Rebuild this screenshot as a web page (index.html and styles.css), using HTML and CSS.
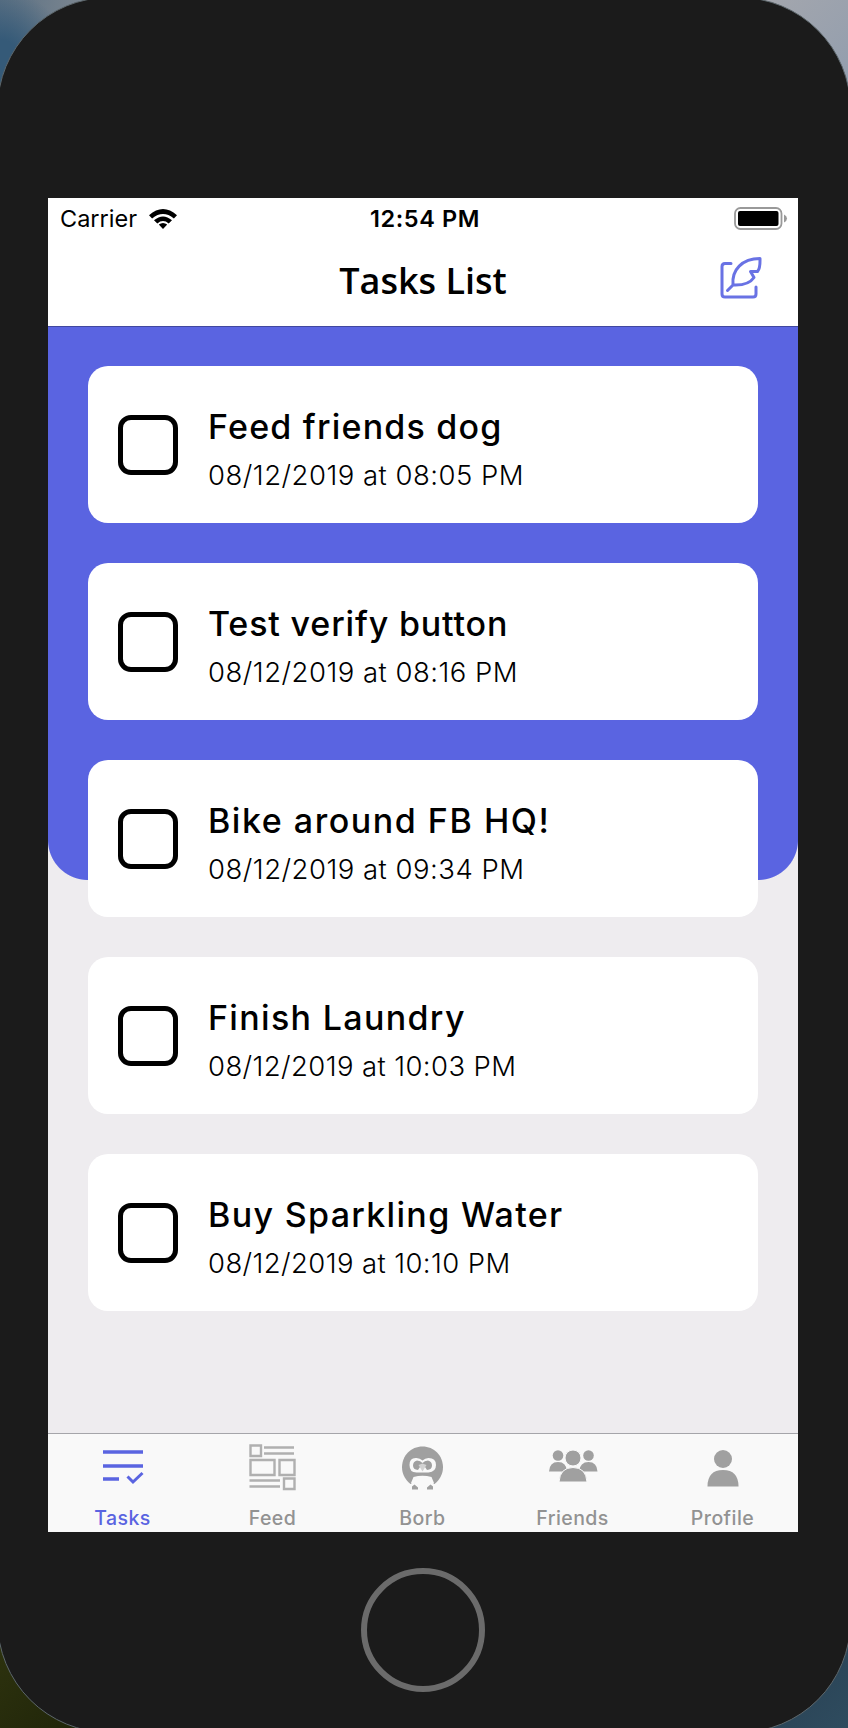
FILE: index.html
```html
<!DOCTYPE html>
<html lang="en">
<head>
<meta charset="utf-8">
<title>Tasks List</title>
<link rel="stylesheet" href="styles.css">
</head>
<body>
<div class="desktop">
<div class="phone">
  <main class="screen">
    <div class="status">
      <div class="carrier"><span class="carrier-name">Carrier</span>
        <svg class="wifi" width="28" height="20" viewBox="0 0 28 20"><path d="M0 6.2Q14-6 28 6.2L24.9 9.4Q14 .5 3.100 9.400Z"/><path d="M5 11.200Q14 3.600 23 11.200L19.700 14.400Q14 9.700 8.300 14.400Z"/><path d="M9.800 15.600Q14 12.200 18.200 15.600L14 20Z"/></svg>
      </div>
      <div class="time">12:54 PM</div>
      <svg class="battery" width="54" height="24" viewBox="0 0 54 24"><rect x="1" y="1" width="46.500" height="21" rx="5.500" fill="none" stroke="#999" stroke-width="1.800"/><rect x="4" y="4" width="40.500" height="15" rx="2" fill="#000"/><path d="M50 7.500q3 1.300 3 4t-3 4z" fill="#999"/></svg>
    </div>
    <header class="nav">
      <h1>Tasks List</h1>
      <svg class="compose" width="44" height="44" viewBox="0 0 44 44"><path d="M12 7.500H6Q3 7.500 3 10.500V38Q3 41 6 41H34Q37 41 37 38V31"/><path d="M8.500 34.500L14 29C12.500 14 23 2.500 41 2.500C41 7 41.500 12 38.500 15.500H31.500L35 21.500C31 27.500 24 29.500 14 29"/></svg>
    </header>
    <section class="tasks">
      <article class="card"><span class="box"></span><div><h2 class="t1">Feed friends dog</h2><p class="d1">08/12/2019 at 08:05 PM</p></div></article>
      <article class="card"><span class="box"></span><div><h2 class="t2">Test verify button</h2><p class="d2">08/12/2019 at 08:16 PM</p></div></article>
      <article class="card"><span class="box"></span><div><h2 class="t3">Bike around FB HQ!</h2><p class="d3">08/12/2019 at 09:34 PM</p></div></article>
      <article class="card"><span class="box"></span><div><h2 class="t4">Finish Laundry</h2><p class="d4">08/12/2019 at 10:03 PM</p></div></article>
      <article class="card"><span class="box"></span><div><h2 class="t5">Buy Sparkling Water</h2><p class="d5">08/12/2019 at 10:10 PM</p></div></article>
    </section>
    <nav class="tabs">
      <a class="tab active"><svg width="50" height="50" viewBox="0 0 50 50" fill="none" stroke="#5a64e1" stroke-width="3"><path d="M5 9H45M5 23H45M5 36H21" stroke-width="3.600"/><path d="M29.500 33.500L35 39L44.500 30" stroke-width="3"/></svg><span>Tasks</span></a>
      <a class="tab"><svg width="50" height="50" viewBox="0 0 50 50" fill="none" stroke="#b0b0b0" stroke-width="2.400"><path d="M2.500 2.500h10.500v10.500h-10.500zM2.500 17h24v15h-24zM31.500 17h15v15h-15zM36 35.500h10.500v10.500h-10.500zM16 4.500H46M16 10.500H46M1.500 37.500H32M1.500 43.500H32"/></svg><span>Feed</span></a>
      <a class="tab"><svg width="50" height="50" viewBox="0 0 50 50" fill="#a0a0a0"><path d="M24.500 3.500C36 3.500 45 12.500 45 24.500C45 31 41.500 37 36.500 41H12.500C7.500 37 4 31 4 24.500C4 12.500 13 3.500 24.500 3.500Z"/><path d="M15.500 34Q24.500 31.500 33.500 34L36 40Q33.500 46 24.500 46T13 40Z" fill="#f9f9f9"/><path d="M14 46.500v-3l2.500-2 3.500 3v2zM35 46.500v-3l-2.500-2-3.500 3v2z"/><path d="M18.500 15Q22 15 24.500 17.500Q27 15 30.500 15Q38 15 38 22T30.500 29.500H18.500Q11.500 29.500 11.500 22T18.500 15Z" fill="#f9f9f9"/><path d="M19 17.500Q22.500 17.500 24.500 20Q26.500 17.500 30 17.500Q34 18.500 34 22.500T29 27L27 24H22L20 27Q15 26.500 15 22.500T19 17.500Z"/><path d="M20.500 22L24.500 20.500L28.500 22L24.500 28.500Z" fill="#d2d2d2"/></svg><span>Borb</span></a>
      <a class="tab"><svg width="50" height="50" viewBox="0 0 50 50" fill="#a0a0a0"><circle cx="10" cy="12.500" r="5.300"/><circle cx="40.500" cy="12.500" r="5.300"/><path d="M1 28.500Q1.500 19 10 19T19 28.500ZM31 28.500Q32 19 40.500 19T49.500 28.500Z"/><g stroke="#f9f9f9"><circle cx="25" cy="15" r="8"/><path d="M11 39Q12 24.500 25 24.500T39 39Z"/></g></svg><span>Friends</span></a>
      <a class="tab"><svg width="50" height="50" viewBox="0 0 50 50" fill="#a0a0a0"><circle cx="25" cy="16" r="9"/><path d="M9.500 43.500Q9.500 27 25 27T40.500 43.500Z"/></svg><span>Profile</span></a>
    </nav>
  </main>
  <div class="home"></div>
</div>
</div>
</body>
</html>
```
FILE: styles.css
```css
* { box-sizing: border-box; }
body { margin: 0; font-family: Inter, sans-serif; color: #000; }
.desktop {
  width: 848px; height: 1728px; overflow: hidden;
  background:
    radial-gradient(circle at 0 60px, #355a78 0 20px, transparent 70px) top left / 120px 120px no-repeat,
    linear-gradient(90deg, #5b7083, #8a9096) top left / 120px 120px no-repeat,
    linear-gradient(135deg, #a7a8ad, #8f9cae) top right / 120px 120px no-repeat,
    linear-gradient(135deg, #30350f, #1d2208) bottom left / 120px 120px no-repeat,
    linear-gradient(135deg, #23384a, #2f4c5f) bottom right / 120px 120px no-repeat;
}
.phone {
  width: 854px; height: 1736px; margin: -3px 0 0 -3px;
  border-radius: 112px; border: 1px solid #5d676c; background: #1b1b1b;
  padding: 200px 0 0 50px; overflow: hidden;
}
.screen { width: 750px; height: 1334px; display: flex; flex-direction: column; background: #eeecef; }
.status { height: 40px; background: #fff; display: grid; grid-template-columns: 1fr auto 1fr; align-items: center; padding: 1px 10px 0 12px; flex: none; }
.carrier { display: flex; align-items: center; gap: 12px; }
.carrier-name { font-size: 23.500px; }
.time { font-size: 23.500px; font-weight: 600; letter-spacing: .6px; padding-left: 2px; }
.battery { justify-self: end; }
.nav { height: 89px; flex: none; background: #fff; border-bottom: 1px solid #40479f; display: grid; grid-template-columns: 1fr auto 1fr; align-items: center; padding: 0 35px 2px; }
.nav h1 { grid-column: 2; margin: 0; font: 600 36px/50px "Open Sans", sans-serif; }
.compose { justify-self: end; margin-bottom: 7px; fill: none; stroke: #6972e4; stroke-width: 3; stroke-linecap: round; stroke-linejoin: round; }
.tasks {
  flex: 1; padding: 39px 40px 0; display: flex; flex-direction: column; gap: 40px;
  background: radial-gradient(circle at 40px 0, #5a64e1 39.500px, transparent 40.500px) 0 513px / 40px 40px no-repeat,
    radial-gradient(circle at 0 0, #5a64e1 39.500px, transparent 40.500px) 100% 513px / 40px 40px no-repeat,
    linear-gradient(#5a64e1, #5a64e1) 40px 0 / 670px 553px no-repeat,
    linear-gradient(#5a64e1, #5a64e1) 0 0 / 100% 513px no-repeat;
}
.card { height: 157px; flex: none; border-radius: 20px; background: #fff; display: flex; align-items: center; gap: 30px; padding: 0 30px; }
.box { width: 60px; height: 60px; border: 5px solid #000; border-radius: 13px; }
.card div { padding-top: 14px; }
.card h2 { margin: 0; font-size: 34px; line-height: 48px; font-weight: 500; white-space: nowrap; }
.card p { margin: 0; font-size: 27.500px; line-height: 49px; font-weight: 300; white-space: nowrap; letter-spacing: .49px; }
.t1 { letter-spacing: 1.200px; }
.t2 { letter-spacing: .83px; }
.t3 { letter-spacing: 1.530px; }
.t4 { letter-spacing: 1.330px; }
.t5 { letter-spacing: 1.320px; }
.card .d4, .card .d5 { letter-spacing: .4px; }
.tabs { height: 99px; flex: none; border-top: 1px solid #a5a5aa; background: #f9f9f9; display: grid; grid-template-columns: 150px repeat(4, 150px); }
.tab { display: flex; flex-direction: column; align-items: center; padding: 9px 1px 0 0; gap: 13px; color: #929292; font-size: 19.500px; line-height: 24px; font-weight: 500; letter-spacing: .45px; }
.tab.active { color: #5a64e1; }
.home { width: 124px; height: 124px; margin: 36px 0 0 313px; border: 6px solid #6b6b6b; border-radius: 50%; }
```
